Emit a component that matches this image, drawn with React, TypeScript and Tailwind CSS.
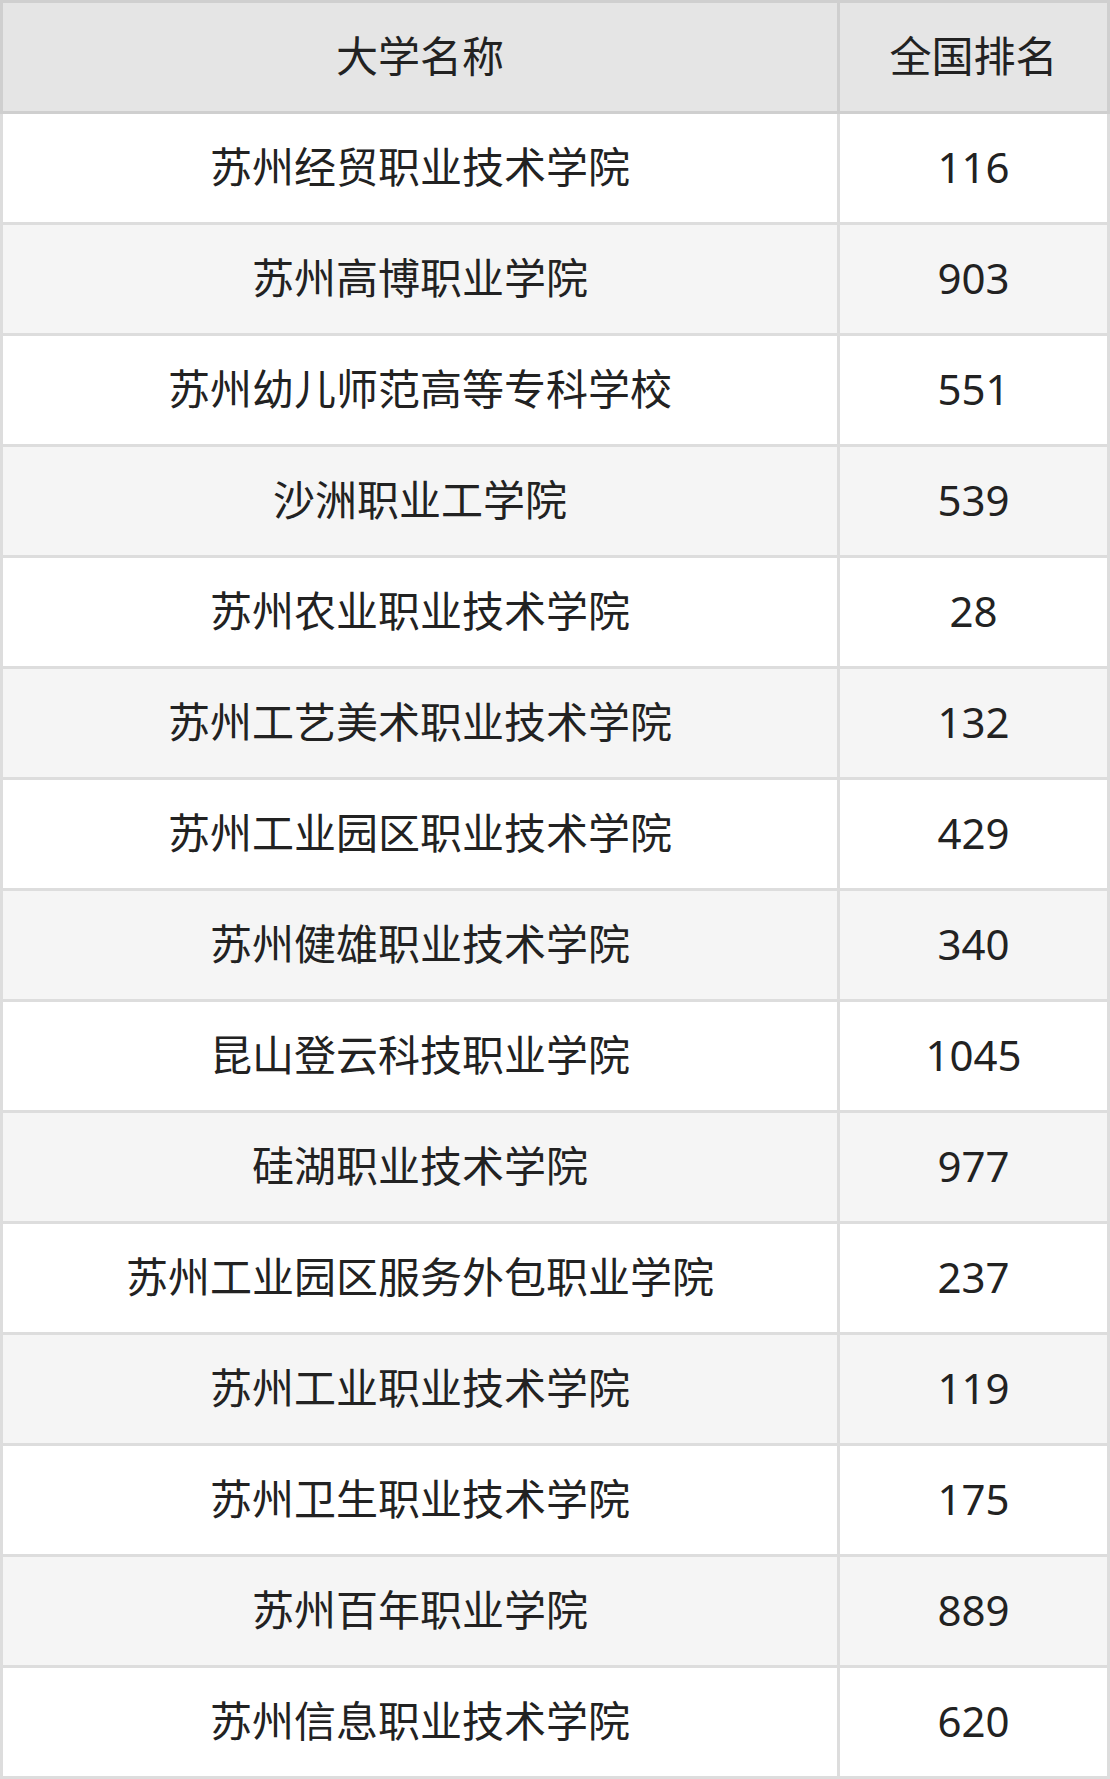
const rows: [string, string][] = [
  ["苏州经贸职业技术学院", "116"],
  ["苏州高博职业学院", "903"],
  ["苏州幼儿师范高等专科学校", "551"],
  ["沙洲职业工学院", "539"],
  ["苏州农业职业技术学院", "28"],
  ["苏州工艺美术职业技术学院", "132"],
  ["苏州工业园区职业技术学院", "429"],
  ["苏州健雄职业技术学院", "340"],
  ["昆山登云科技职业学院", "1045"],
  ["硅湖职业技术学院", "977"],
  ["苏州工业园区服务外包职业学院", "237"],
  ["苏州工业职业技术学院", "119"],
  ["苏州卫生职业技术学院", "175"],
  ["苏州百年职业学院", "889"],
  ["苏州信息职业技术学院", "620"],
];

export default function App() {
  return (
    <div
      className="w-[1110px] bg-white text-[42px] text-[#222]"
      style={{ fontFamily: '"Noto Sans", "Noto Sans CJK SC", sans-serif' }}
    >
      {/* Header */}
      <div className="flex bg-[#e5e5e5] border-[3px] border-[#cfcfcf]">
        <div className="w-[837px] h-[108px] pb-[3px] flex items-center justify-center border-r-[3px] border-[#cfcfcf]">
          大学名称
        </div>
        <div className="flex-1 h-[108px] pb-[3px] flex items-center justify-center">
          全国排名
        </div>
      </div>

      {/* Body */}
      {rows.map(([name, rank], index) => (
        <div
          key={index}
          className={`flex border-x-[3px] border-b-[3px] border-[#dddddd] ${
            index % 2 === 1 ? "bg-[#f5f5f5]" : "bg-white"
          }`}
        >
          <div className="w-[837px] h-[108px] pb-[3px] flex items-center justify-center border-r-[3px] border-[#dddddd]">
            {name}
          </div>
          <div className="flex-1 h-[108px] pb-[3px] flex items-center justify-center">
            {rank}
          </div>
        </div>
      ))}
    </div>
  );
}
